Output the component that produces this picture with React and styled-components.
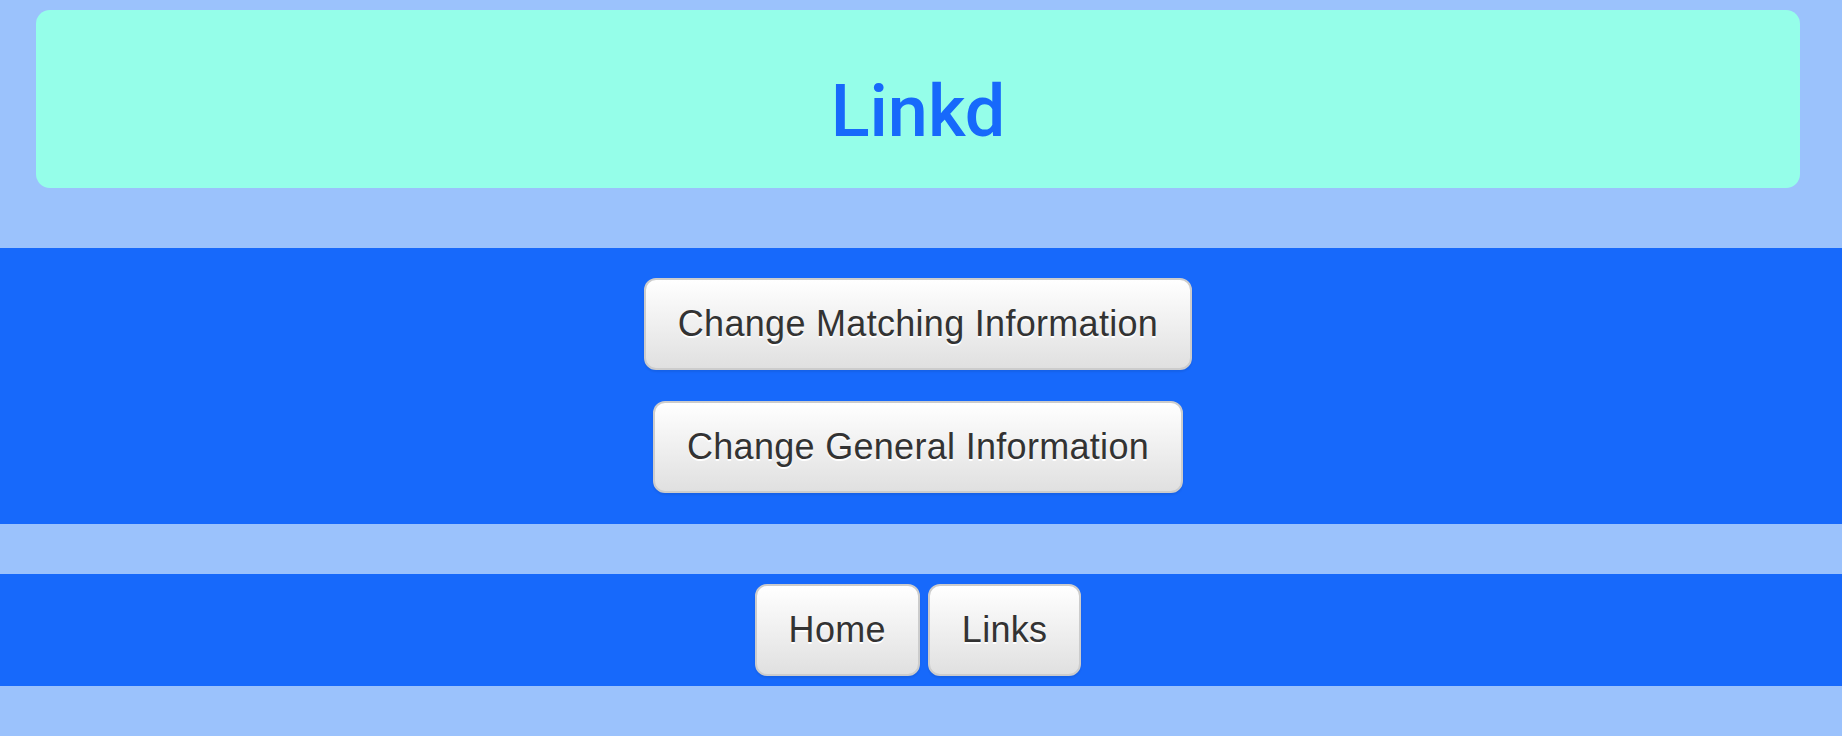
import styled, { createGlobalStyle } from "styled-components"

const GlobalStyle = createGlobalStyle`
  html, body {
    margin: 0;
    padding: 0;
    background: #9bc2fc;
    font-family: "Liberation Sans", Arial, Helvetica, sans-serif;
  }
  * {
    box-sizing: border-box;
  }
`

const Page = styled.div`
  min-height: 736px;
  background: #9bc2fc;
  padding-bottom: 52px;
`

const Header = styled.div`
  padding: 10px 42px 60px 36px;
`

const Jumbotron = styled.div`
  background: #95fee9;
  border-radius: 14px;
  height: 178px;
  padding-top: 62px;
  text-align: center;
`

const Title = styled.h1`
  margin: 0;
  font-family: Roboto, "Liberation Sans", Arial, sans-serif;
  font-size: 72px;
  line-height: 79px;
  font-weight: 500;
  color: #1769fb;
`

const Band = styled.div`
  background: #1769fb;
  display: flex;
  flex-direction: ${p => (p.$stack ? "column" : "row")};
  align-items: center;
  justify-content: center;
  gap: ${p => (p.$stack ? "31px" : "8px")};
  padding: ${p => (p.$stack ? "30px 6px 31px 0" : "10px 6px 10px 0")};
  margin-bottom: ${p => p.$gap || 0}px;
`

const Button = styled.button`
  font-family: "Liberation Sans", Arial, Helvetica, sans-serif;
  font-size: 36px;
  line-height: 48px;
  letter-spacing: 0.3px;
  padding: 20px 32px;
  color: #333;
  border: 2px solid #ccc;
  border-radius: 12px;
  background-image: linear-gradient(to bottom, #fff 0, #e0e0e0 100%);
  text-shadow: 0 2px 0 #fff;
  box-shadow: inset 0 2px 0 rgba(255, 255, 255, 0.15), 0 2px 2px rgba(0, 0, 0, 0.075);
  cursor: pointer;
  white-space: nowrap;
`

export default function App() {
  return (
    <>
      <GlobalStyle />
      <Page>
        <Header>
          <Jumbotron>
            <Title>Linkd</Title>
          </Jumbotron>
        </Header>
        <Band $stack $gap={50}>
          <Button>Change Matching Information</Button>
          <Button>Change General Information</Button>
        </Band>
        <Band>
          <Button>Home</Button>
          <Button>Links</Button>
        </Band>
      </Page>
    </>
  )
}
